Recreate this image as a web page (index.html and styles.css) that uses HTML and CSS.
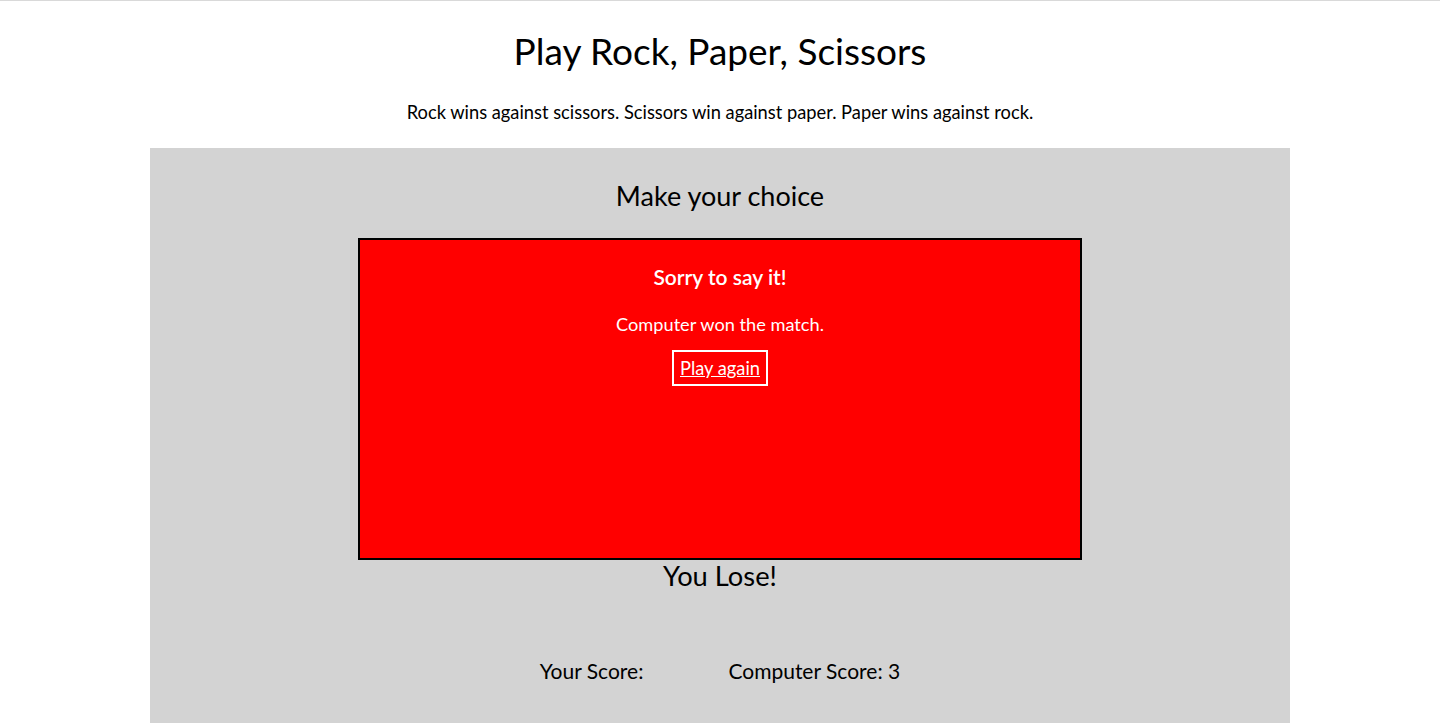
FILE: index.html
```html
<!DOCTYPE html>
<html lang="en">
<head>
<meta charset="utf-8">
<title>Rock Paper Scissors</title>
<link rel="stylesheet" href="styles.css">
</head>
<body>
<header class="intro">
  <h1 class="title">Play Rock, Paper, Scissors</h1>
  <p class="rules">Rock wins against scissors. Scissors win against paper. Paper wins against rock.</p>
</header>
<main class="game">
  <h2 class="prompt">Make your choice</h2>
  <section class="result-box">
    <h3 class="result-title">Sorry to say it!</h3>
    <p class="result-text">Computer won the match.</p>
    <button class="again" type="button">Play again</button>
  </section>
  <h2 class="outcome">You Lose!</h2>
  <div class="scores">
    <span class="score">Your Score: </span>
    <span class="score">Computer Score: 3</span>
  </div>
</main>
</body>
</html>
```

FILE: styles.css
```css
html, body {
  margin: 0;
  padding: 0;
}
body {
  border-top: 1px solid #d9d9d9;
  font-family: Lato, "Liberation Sans", sans-serif;
  color: #000;
  background: #fff;
  overflow: hidden;
  height: 722px;
}
.intro {
  text-align: center;
}
.title {
  margin: 0;
  padding-top: 26px;
  font-size: 37px;
  font-weight: 400;
  line-height: 48px;
}
.rules {
  margin: 25px 0 0;
  font-size: 18.3px;
  line-height: 24px;
}
.game {
  width: 1140px;
  margin: 24px auto 0;
  background: #d3d3d3;
  min-height: 600px;
  display: flex;
  flex-direction: column;
  align-items: center;
}
.prompt {
  margin: 0;
  padding-top: 30px;
  font-size: 27px;
  font-weight: 400;
  line-height: 36px;
}
.result-box {
  box-sizing: border-box;
  width: 724px;
  height: 322px;
  margin-top: 24px;
  border: 2px solid #000;
  background: #ff0000;
  color: #fff;
  display: flex;
  flex-direction: column;
  align-items: center;
}
.result-title {
  margin: 23px 0 0;
  font-size: 21px;
  font-weight: 600;
  line-height: 28px;
}
.result-text {
  margin: 21px 0 0;
  font-size: 18.2px;
  line-height: 24px;
}
.again {
  margin-top: 14px;
  padding: 4px 6px 4px;
  background: transparent;
  color: #fff;
  border: 2px solid #fff;
  font-family: inherit;
  font-size: 18.3px;
  line-height: 24px;
  text-decoration: underline;
}
.outcome {
  margin: 1px 0 0;
  font-size: 27.3px;
  font-weight: 400;
  line-height: 30px;
}
.scores {
  margin-top: 66px;
  display: flex;
  gap: 85px;
  font-size: 21px;
  line-height: 28px;
}
```
